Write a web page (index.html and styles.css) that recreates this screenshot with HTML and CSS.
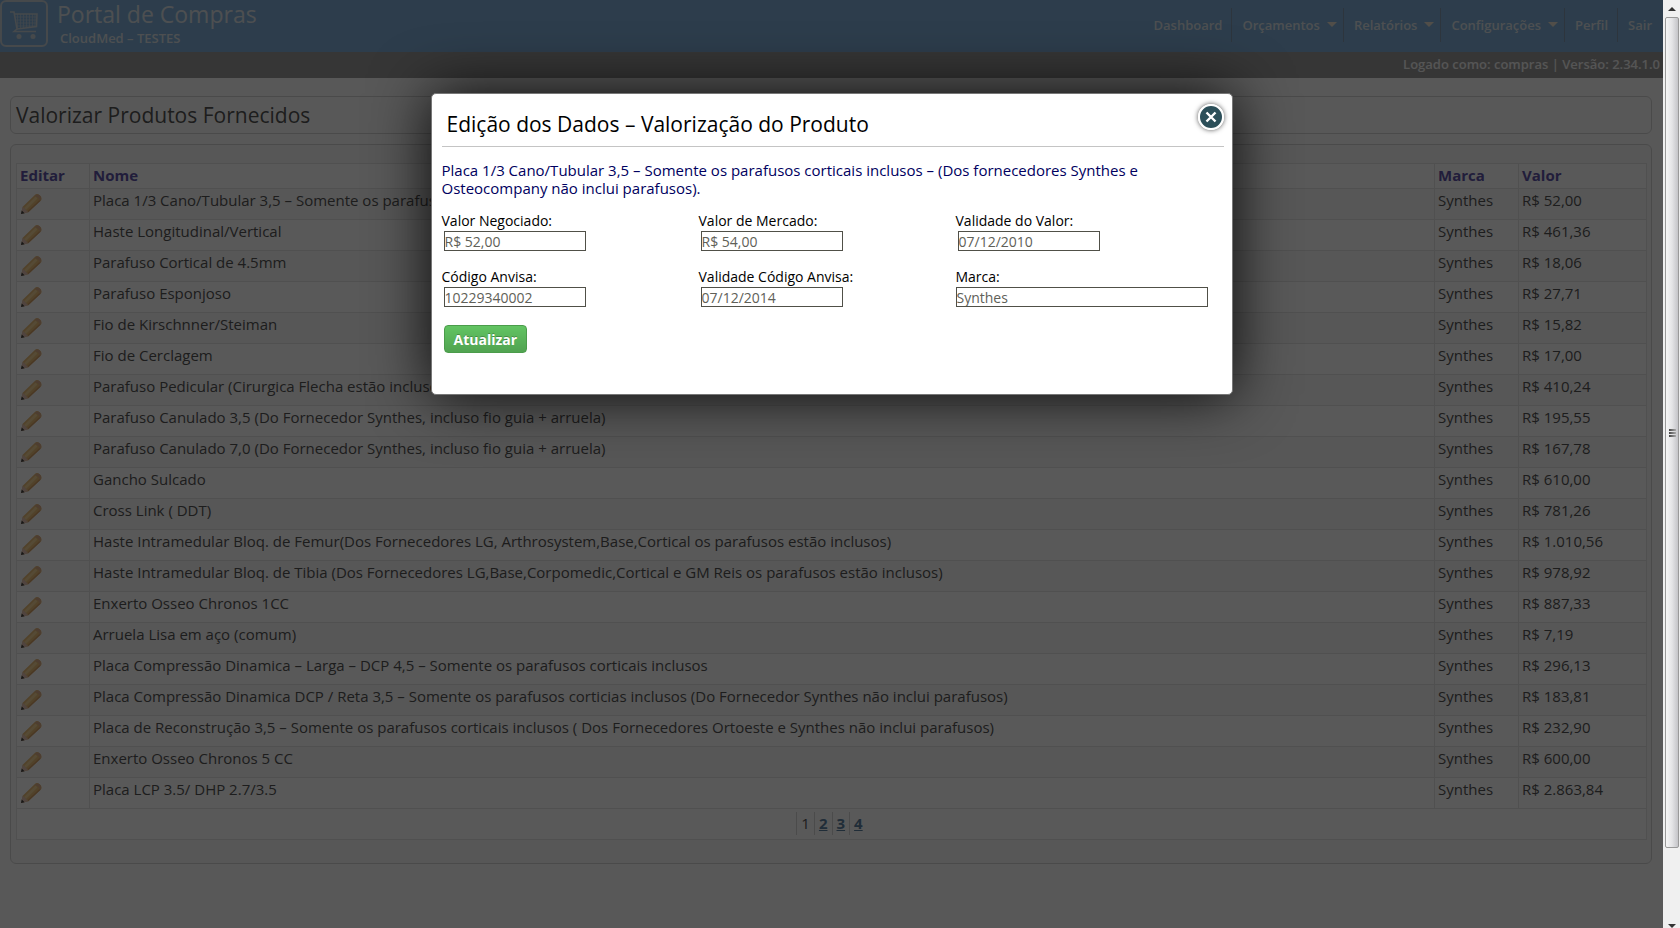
FILE: index.html
```html
<!DOCTYPE html>
<html lang="pt-BR">
<head>
<meta charset="utf-8">
<title>Portal de Compras</title>
<link rel="stylesheet" href="styles.css">
</head>
<body>
<div class="viewport">
<div class="page">
  <header class="topbar">
    <svg class="logo" viewBox="0 0 48 47" aria-hidden="true">
      <rect x="1" y="1" width="46" height="45" rx="5" fill="none" stroke="#c8d0d8" stroke-width="2"/>
      <g fill="none" stroke="#c8d0d8" stroke-width="1.500">
        <path d="M10 12h4l3 17-3 2.500h22"/>
        <path d="M14.500 14h22.500l-.5 12.500-19.500 2.500"/>
        <path stroke-width=".6" d="M15 17h22M16 20h21M16.500 23h20M17 26h19.500M17.500 14v14.500M20.500 14v14.500M23.500 14v14M26.500 14v13.500M29.500 14v13M32.500 14v13M35 14v12.500"/>
      </g>
      <circle cx="19" cy="36.500" r="2.500" fill="#c8d0d8"/><circle cx="33" cy="36.500" r="2.500" fill="#c8d0d8"/>
    </svg>
    <div class="brand">
      <h1 class="brand-name">Portal de Compras</h1>
      <p class="brand-sub">CloudMed – TESTES</p>
    </div>
    <nav class="menu">
      <a href="#">Dashboard</a>
      <a href="#">Orçamentos<span class="caret"></span></a>
      <a href="#">Relatórios<span class="caret"></span></a>
      <a href="#">Configurações<span class="caret"></span></a>
      <a href="#">Perfil</a>
      <a href="#">Sair</a>
    </nav>
  </header>
  <div class="status">Logado como: compras | Versão: 2.34.1.0</div>
  <main class="content">
    <h2 class="box page-title">Valorizar Produtos Fornecidos</h2>
    <section class="box listing">
      <table class="grid">
        <thead><tr><th class="col-edit">Editar</th><th>Nome</th><th class="col-brand">Marca</th><th class="col-value">Valor</th></tr></thead>
        <tbody id="rows"></tbody>
        <tfoot><tr><td colspan="4"><div class="pager"><span>1</span><a href="#">2</a><a href="#">3</a><a href="#">4</a></div></td></tr></tfoot>
      </table>
    </section>
  </main>
  <div class="overlay"></div>
  <div class="modal" role="dialog" aria-labelledby="modal-title">
    <button class="close" type="button" aria-label="Fechar">
      <svg viewBox="0 0 26 26" aria-hidden="true"><circle cx="13" cy="13" r="12" fill="#2c4f59" stroke="#fff" stroke-width="2"/><path d="M8.500 8.500l9 9M17.500 8.500l-9 9" stroke="#fff" stroke-width="2.400" fill="none"/></svg>
    </button>
    <h2 class="modal-title" id="modal-title">Edição dos Dados – Valorização do Produto</h2>
    <p class="product">Placa 1/3 Cano/Tubular 3,5 – Somente os parafusos corticais inclusos – (Dos fornecedores Synthes e Osteocompany não inclui parafusos).</p>
    <form class="fields">
      <div class="field"><label for="neg">Valor Negociado:</label><input id="neg" type="text" value="R$ 52,00"></div>
      <div class="field"><label for="mer">Valor de Mercado:</label><input id="mer" type="text" value="R$ 54,00"></div>
      <div class="field"><label for="val">Validade do Valor:</label><input id="val" type="text" value="07/12/2010"></div>
      <div class="field"><label for="cod">Código Anvisa:</label><input id="cod" type="text" value="10229340002"></div>
      <div class="field"><label for="vca">Validade Código Anvisa:</label><input id="vca" type="text" value="07/12/2014"></div>
      <div class="field wide"><label for="mar">Marca:</label><input id="mar" type="text" value="Synthes"></div>
      <button class="update" type="button">Atualizar</button>
    </form>
  </div>
</div>
<div class="scrollbar" aria-hidden="true">
  <div class="arrow up"></div>
  <div class="track"><div class="thumb"><i></i><i></i><i></i></div></div>
  <div class="arrow down"></div>
</div>
</div>
<script src="rows.js"></script>
</body>
</html>
```
FILE: rows.js
```javascript
const products = [
  ["Placa 1/3 Cano/Tubular 3,5 – Somente os parafusos corticais inclusos – (Dos fornecedores Synthes e Osteocompany não inclui parafusos).", "52,00"],
  ["Haste Longitudinal/Vertical", "461,36"],
  ["Parafuso Cortical de 4.5mm", "18,06"],
  ["Parafuso Esponjoso", "27,71"],
  ["Fio de Kirschnner/Steiman", "15,82"],
  ["Fio de Cerclagem", "17,00"],
  ["Parafuso Pedicular (Cirurgica Flecha estão inclusos)", "410,24"],
  ["Parafuso Canulado 3,5 (Do Fornecedor Synthes, incluso fio guia + arruela)", "195,55"],
  ["Parafuso Canulado 7,0 (Do Fornecedor Synthes, incluso fio guia + arruela)", "167,78"],
  ["Gancho Sulcado", "610,00"],
  ["Cross Link ( DDT)", "781,26"],
  ["Haste Intramedular Bloq. de Femur(Dos Fornecedores LG, Arthrosystem,Base,Cortical os parafusos estão inclusos)", "1.010,56"],
  ["Haste Intramedular Bloq. de Tibia (Dos Fornecedores LG,Base,Corpomedic,Cortical e GM Reis os parafusos estão inclusos)", "978,92"],
  ["Enxerto Osseo Chronos 1CC", "887,33"],
  ["Arruela Lisa em aço (comum)", "7,19"],
  ["Placa Compressão Dinamica – Larga – DCP 4,5 – Somente os parafusos corticais inclusos", "296,13"],
  ["Placa Compressão Dinamica DCP / Reta 3,5 – Somente os parafusos corticias inclusos (Do Fornecedor Synthes não inclui parafusos)", "183,81"],
  ["Placa de Reconstrução 3,5 – Somente os parafusos corticais inclusos ( Dos Fornecedores Ortoeste e Synthes não inclui parafusos)", "232,90"],
  ["Enxerto Osseo Chronos 5 CC", "600,00"],
  ["Placa LCP 3.5/ DHP 2.7/3.5", "2.863,84"]
];
const pencil = `<a href="#" class="edit" aria-label="Editar"><svg viewBox="0 0 24 24" aria-hidden="true">
<path d="M1 23l2-8L16.500 2q2-2 5 .5t1.500 5.500L9 21z" fill="#e8bc78"/>
<path d="M5.500 17.500L18 5" stroke="#f4d498" stroke-width="3"/>
<path d="M8.500 20.500L22 8" stroke="#d4a068" stroke-width="1.500"/>
<path d="M1 23l2-8 6 6z" fill="#e4c4b4"/><path d="M1 23l1-4 3 3z" fill="#444"/>
<path d="M17.500 2q2-1 4 .5t1.500 4.500l-1.500 1.500q-1-4.500-5.500-5z" fill="#dcb08c"/></svg></a>`;
document.getElementById("rows").innerHTML = products.map(([name, price]) =>
  `<tr><td class="cell-edit">${pencil}</td><td>${name}</td><td>Synthes</td><td>R$ ${price}</td></tr>`).join("");
```
FILE: styles.css
```css
* { box-sizing: border-box; }
body {
  margin: 0;
  font-family: "Open Sans", "Noto Sans", sans-serif;
  font-size: 15px;
  color: #555;
}
h1, h2, p { margin: 0; font-weight: 400; }

.viewport { display: flex; min-height: 100vh; }
.page { position: relative; flex: 1; background: #fdfdfd; }

.topbar {
  display: flex;
  height: 52px;
  padding-right: 2px;
  background: #80b0da;
  color: #dde3e8;
}
.logo { width: 48px; height: 47px; }
.brand { flex: 1; padding-left: 9px; }
.brand-name { font-size: 23px; line-height: 28px; }
.brand-sub { padding-left: 3px; font-size: 13px; font-weight: 600; line-height: 20px; }
.menu { display: flex; height: 34px; margin-top: 8px; }
.menu a {
  display: flex;
  align-items: center;
  padding: 0 9px 0 10px;
  color: #dde3e8;
  font-size: 13px;
  font-weight: 600;
  text-decoration: none;
}
.menu a + a { border-left: 1px solid #8199b0; }
.caret {
  margin: 0 -3px 2px 7px;
  border: 5px solid transparent;
  border-top-color: #e8e0d0;
  border-bottom: 0;
}
.status {
  height: 26px;
  padding-right: 3px;
  background: #9b9b9b;
  color: #f4f4f4;
  font-size: 13px;
  font-weight: 600;
  line-height: 24px;
  text-align: right;
}

.content { padding: 18px 11px 0 10px; }
.box { border: 1px solid #d4d4d4; border-radius: 6px; }
.page-title {
  margin-bottom: 10px;
  padding: 1px 5px 0;
  font-size: 21px;
  line-height: 35px;
}
.listing { padding: 18px 4px 23px 5px; background: #f8f8f8; }
.grid { width: 100%; border-collapse: collapse; background: #fff; table-layout: fixed; }
.grid th, .grid td {
  padding: 0 3px;
  border: 1px solid #e6e6e6;
  text-align: left;
  vertical-align: top;
}
.grid th { height: 25px; color: #6054a8; font-weight: 700; line-height: 22px; }
.grid td { height: 31px; line-height: 22px; }
.grid tbody tr:nth-child(odd) { background: #f8f8f8; }
.col-edit { width: 73px; }
.col-brand { width: 84px; }
.col-value { width: 128px; }
.edit { display: block; width: 22px; height: 22px; margin-top: 4px; }
.edit svg { display: block; width: 22px; height: 22px; }
.pager { display: flex; justify-content: center; padding-top: 3px; }
.pager > * { padding: 0 4px; border-left: 1px solid #d8d8d8; line-height: 23px; }
.pager a { color: #5c80a0; font-weight: 700; }

.overlay { position: absolute; inset: 0; background: rgba(0, 0, 0, .65); }
.modal {
  position: absolute;
  top: 93px;
  left: 50%;
  width: 802px;
  min-height: 302px;
  padding: 10px 8px 10px 10px;
  transform: translateX(-50%);
  border: 1px solid #777;
  border-radius: 5px;
  background: #fff;
  box-shadow: 0 0 60px rgba(0, 0, 0, .9);
  color: #000;
}
.close {
  position: absolute;
  top: 10px;
  right: 8px;
  width: 26px;
  height: 26px;
  padding: 0;
  border: 0;
  border-radius: 50%;
  background: none;
  box-shadow: 0 0 5px #555;
}
.close svg { display: block; }
.modal-title {
  margin-bottom: 14px;
  padding: 1px 5px 3px;
  border-bottom: 1px solid #c4c4c4;
  font-size: 21px;
  line-height: 38px;
}
.product { max-width: 720px; margin-bottom: 14px; color: #000060; line-height: 18px; }
.fields { display: grid; grid-template-columns: 257px 257px 1fr; row-gap: 16px; }
.field label { display: block; font-size: 14px; line-height: 20px; }
.field input {
  display: block;
  width: 142px;
  height: 20px;
  margin-left: 2px;
  padding: 0;
  border: 1px solid #505048;
  color: #606058;
  background: #fff;
  font: 14px/18px "Open Sans", "Noto Sans", sans-serif;
}
.field.wide input { width: 252px; margin-left: 0; }
.update {
  justify-self: start;
  height: 28px;
  margin: 2px 0 0 2px;
  padding: 0 9px;
  border: 1px solid #4b9c4b;
  border-radius: 4px;
  background: linear-gradient(#62c462, #51a351);
  color: #fff;
  font: 700 14px "Open Sans", "Noto Sans", sans-serif;
  text-shadow: 0 -1px 0 rgba(0, 0, 0, .25);
}

.scrollbar {
  position: sticky;
  top: 0;
  display: flex;
  flex-direction: column;
  width: 17px;
  height: 100vh;
  background: #f0f0f0;
}
.arrow { height: 17px; display: flex; align-items: center; justify-content: center; }
.arrow::before { content: ""; border: 4px solid transparent; }
.up::before { border-bottom-color: #333; border-top: 0; }
.down { align-items: flex-end; }
.down::before { border-top-color: #333; border-bottom: 0; }
.track { flex: 1; padding: 0 1px 0 2px; }
.thumb {
  display: flex;
  flex-direction: column;
  align-items: center;
  justify-content: center;
  gap: 1px;
  height: 93%;
  border: 1px solid #999;
  border-radius: 2px;
  background: linear-gradient(90deg, #f6f6f6, #e4e4e6 50%, #c4c4c8);
}
.thumb i { width: 7px; height: 2px; background: linear-gradient(90deg, #444, #aaa); }
```
